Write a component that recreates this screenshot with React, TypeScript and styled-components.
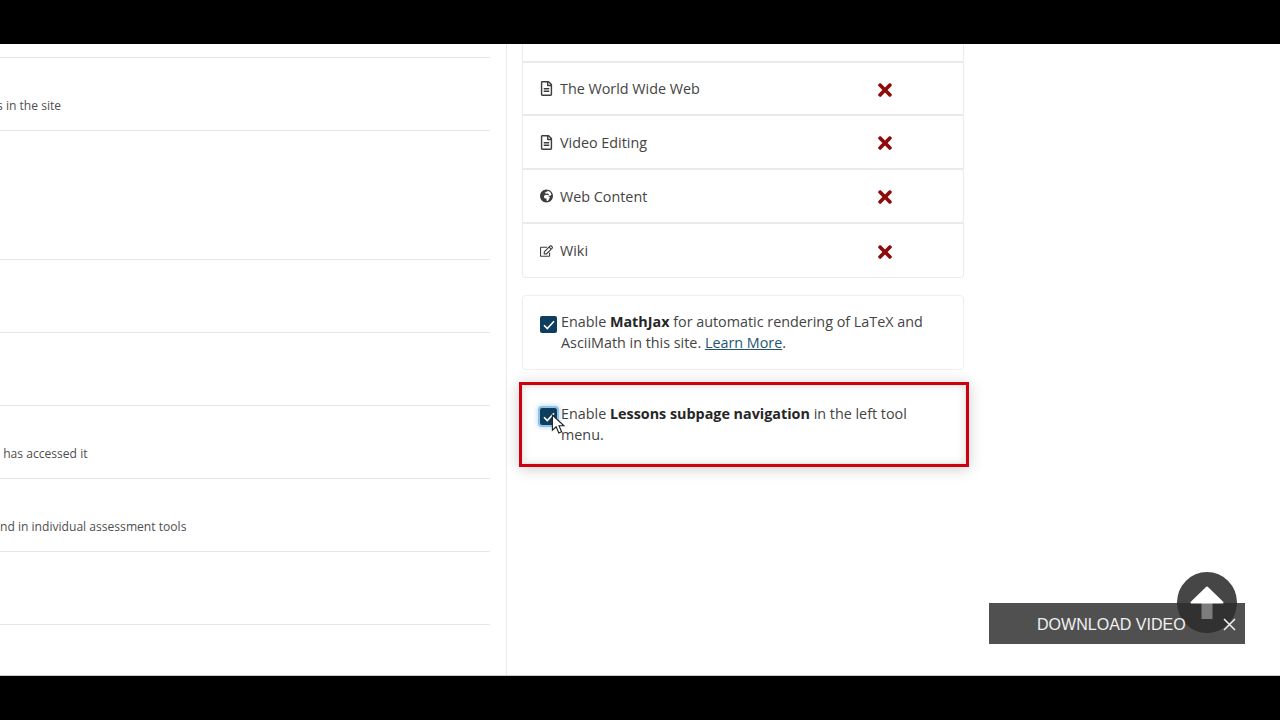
import styled, { createGlobalStyle } from 'styled-components';
import { FaGlobeAfrica, FaRegEdit, FaRegFileAlt, FaTimes } from 'react-icons/fa';

const GlobalStyle = createGlobalStyle`
  html, body {
    margin: 0;
    background: #000;
    font-family: "Open Sans", "Liberation Sans", sans-serif;
  }
  * { box-sizing: border-box; }
`;

const LEFT_ROWS = [
  { text: 's in the site', height: 73, indent: -3 },
  { text: '', height: 129, indent: 0 },
  { text: '', height: 73, indent: 0 },
  { text: '', height: 73, indent: 0 },
  { text: ' has accessed it', height: 73, indent: 0 },
  { text: 'nd in individual assessment tools', height: 73, indent: 0 },
  { text: '', height: 74, indent: 0 },
];

const TOOLS = [
  { name: 'The World Wide Web', icon: <FaRegFileAlt />, size: 15, height: 53 },
  { name: 'Video Editing', icon: <FaRegFileAlt />, size: 15, height: 54 },
  { name: 'Web Content', icon: <FaGlobeAfrica />, size: 14, height: 54 },
  { name: 'Wiki', icon: <FaRegEdit />, size: 14, height: 54 },
];

const Checkbox = () => (
  <CheckBoxBox>
    <svg width="12" height="10" viewBox="0 0 12 10">
      <path d="M1 5.2 4.3 8.5 11 1.2" fill="none" stroke="#fff" strokeWidth="1.6" />
    </svg>
  </CheckBoxBox>
);

const App = () => (
  <Page>
    <GlobalStyle />
    <Bar />
    <Main>
      <LeftColumn>
        {LEFT_ROWS.map((row, i) => (
          <LeftRow key={i} $height={row.height} $indent={row.indent}>
            {row.text}
          </LeftRow>
        ))}
      </LeftColumn>
      <RightColumn>
        <ToolCard>
          <ToolStub />
          {TOOLS.map((tool) => (
            <ToolRow key={tool.name} $height={tool.height}>
              <ToolIcon $size={tool.size}>{tool.icon}</ToolIcon>
              <ToolName>{tool.name}</ToolName>
              <ToolStatus>
                <FaTimes />
              </ToolStatus>
            </ToolRow>
          ))}
        </ToolCard>
        <OptionCard>
          <CheckSlot>
            <Checkbox />
          </CheckSlot>
          <OptionText>
            Enable <strong>MathJax</strong> for automatic rendering of LaTeX and AsciiMath in this
            site. <LearnMore href="#">Learn More</LearnMore>.
          </OptionText>
        </OptionCard>
        <HighlightFrame>
          <HighlightCard>
            <CheckSlot>
              <FocusRing>
                <Checkbox />
              </FocusRing>
            </CheckSlot>
            <OptionText>
              Enable <strong>Lessons subpage navigation</strong> in the left tool menu.
            </OptionText>
            <Pointer width="15" height="21" viewBox="0 0 16 22">
              <path
                d="M1.5 1v16l4-3.6 2.8 6.6 3-1.3-2.8-6.4h5.3z"
                fill="#fff"
                stroke="#222"
                strokeWidth="1.2"
              />
            </Pointer>
          </HighlightCard>
        </HighlightFrame>
      </RightColumn>
      <DownloadBanner>
        <BannerLabel>DOWNLOAD VIDEO</BannerLabel>
        <CloseMark width="13" height="13" viewBox="0 0 13 13">
          <path d="M1 1 12 12M12 1 1 12" stroke="#f2f2f2" strokeWidth="1.5" />
        </CloseMark>
      </DownloadBanner>
      <ScrollTop>
        <svg width="34" height="33" viewBox="0 0 34 33">
          <path d="M11.5 16h11v17h-11z" fill="#7d7d7d" />
          <path d="M17 1.5 32.5 16.5h-31z" fill="#fff" stroke="#fff" strokeWidth="2" strokeLinejoin="round" />
        </svg>
      </ScrollTop>
    </Main>
    <BottomBar />
  </Page>
);

export default App;

const Page = styled.div`
  display: flex;
  flex-direction: column;
  width: 1280px;
  height: 720px;
  overflow: hidden;
`;

const Bar = styled.div`
  height: 44px;
  background: #000;
`;

const BottomBar = styled.div`
  height: 45px;
  background: #000;
  border-top: 1px solid #c9c9c9;
`;

const Main = styled.div`
  position: relative;
  display: flex;
  flex: 1;
  background: #fff;
`;

const LeftColumn = styled.div`
  width: 490px;
  padding-top: 13px;
`;

const LeftRow = styled.div<{ $height: number; $indent: number }>`
  height: ${(props) => props.$height}px;
  padding-top: 39px;
  border-top: 1px solid #e4e6e8;
  font-size: 12.1px;
  line-height: 18px;
  color: #4f4f4f;
  text-indent: ${(props) => props.$indent}px;
  white-space: pre;

  &:last-child {
    border-bottom: 1px solid #e4e6e8;
  }
`;

const RightColumn = styled.div`
  display: flex;
  flex-direction: column;
  width: 458px;
  margin-left: 16px;
  padding-left: 15px;
  border-left: 1px solid #e8eaec;
`;

const ToolCard = styled.div`
  width: 442px;
  border: 1px solid #e9ebed;
  border-top: 0;
  border-radius: 0 0 4px 4px;
`;

const ToolStub = styled.div`
  height: 19px;
  border-bottom: 2px solid #e8eaec;
`;

const ToolRow = styled.div<{ $height: number }>`
  display: flex;
  align-items: center;
  height: ${(props) => props.$height}px;
  padding: 0 17px;
  border-bottom: 2px solid #e8eaec;
  color: #444;
  font-size: 14.35px;

  &:last-child {
    border-bottom: 0;
    height: 53px;
  }
`;

const ToolIcon = styled.span<{ $size: number }>`
  display: flex;
  justify-content: center;
  width: 13px;
  font-size: ${(props) => props.$size}px;
  color: #3d3d3d;
`;

const ToolName = styled.span`
  flex: 1;
  margin-left: 7px;
`;

const ToolStatus = styled.span`
  display: flex;
  justify-content: center;
  width: 20px;
  margin-top: 2px;
  margin-right: 51px;
  font-size: 20px;
  color: #8f0a0a;
`;

const OptionCard = styled.div`
  display: flex;
  width: 442px;
  height: 75px;
  margin-top: 17px;
  padding: 16px 17px 0;
  border: 1px solid #eceef0;
  border-radius: 4px;
`;

const CheckSlot = styled.div`
  flex: none;
  width: 21px;
  padding-top: 4px;
`;

const CheckBoxBox = styled.span`
  display: flex;
  align-items: center;
  justify-content: center;
  width: 17px;
  height: 17px;
  border-radius: 2px;
  background: #0f3d5e;
`;

const FocusRing = styled.span`
  display: block;
  width: 17px;
  border-radius: 2px;
  box-shadow: 0 0 0 2px #8cc2ec, 0 0 4px 3px rgba(125, 185, 232, 0.45);
`;

const OptionText = styled.div`
  font-size: 14.35px;
  line-height: 20.5px;
  color: #444;

  strong {
    color: #262626;
    font-weight: 700;
  }
`;

const LearnMore = styled.a`
  color: #1f5573;
`;

const HighlightFrame = styled.div`
  width: 450px;
  height: 85px;
  margin: 12px 0 0 -3px;
  border: 3px solid #cf000d;
  box-shadow: 0 2px 14px rgba(0, 0, 0, 0.2);
`;

const HighlightCard = styled.div`
  position: relative;
  display: flex;
  height: 100%;
  padding: 18px 40px 0 17px;
  border: 1px solid #e6e6e6;
  box-shadow: inset 0 0 8px rgba(0, 0, 0, 0.12);
`;

const Pointer = styled.svg`
  position: absolute;
  left: 28px;
  top: 28px;
`;

const DownloadBanner = styled.div`
  position: absolute;
  left: 989px;
  top: 559px;
  display: flex;
  align-items: center;
  width: 256px;
  height: 41px;
  padding: 2px 0 0 48px;
  background: #505050;
`;

const BannerLabel = styled.span`
  position: relative;
  z-index: 2;
  color: #f0f0f0;
  font-family: "Liberation Sans", Arial, sans-serif;
  font-size: 16.05px;
`;

const CloseMark = styled.svg`
  position: absolute;
  z-index: 2;
  right: 9px;
  top: 15px;
`;

const ScrollTop = styled.div`
  position: absolute;
  z-index: 1;
  left: 1177px;
  top: 528px;
  display: flex;
  justify-content: center;
  width: 60px;
  height: 61px;
  padding-top: 14px;
  border-radius: 50%;
  background: rgba(44, 44, 44, 0.88);
`;
